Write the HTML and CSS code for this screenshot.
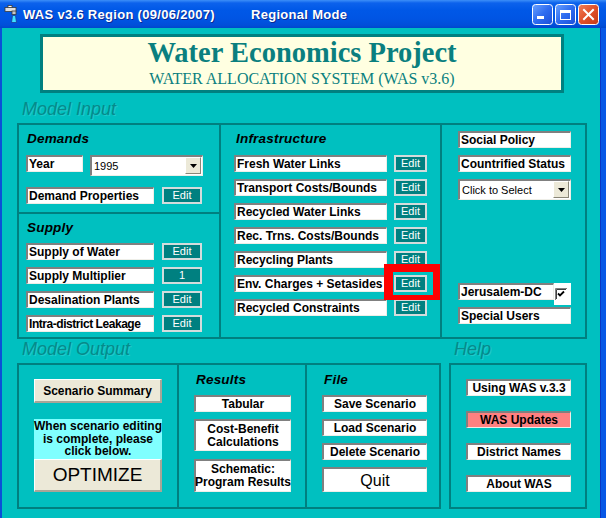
FILE: index.html
```html
<!DOCTYPE html>
<html>
<head>
<meta charset="utf-8">
<title>WAS v3.6 Region</title>
<link rel="stylesheet" href="styles.css">
</head>
<body>
<div class="window">
  <div class="titlebar">
    <svg class="app-icon" width="16" height="18" viewBox="0 0 16 18">
      <rect x="1" y="2.5" width="11" height="4" fill="#e0e0e0" stroke="#3a3a3a" stroke-width="0.8"/>
      <rect x="4" y="0.5" width="4" height="2" fill="#ffffff" stroke="#3a3a3a" stroke-width="0.8"/>
      <rect x="8" y="6" width="4" height="3.5" fill="#c8c8c8" stroke="#3a3a3a" stroke-width="0.8"/>
      <path d="M8.5 10.5 L11.5 10.5 L12.5 17.5 L7.5 17.5 Z" fill="#3fe3ff" stroke="#1b3b9b" stroke-width="0.8"/>
    </svg>
    <span class="title">WAS v3.6 Region (09/06/2007)</span>
    <span class="title mode">Regional Mode</span>
    <div class="caption">
      <svg width="21" height="21" viewBox="0 0 21 21">
        <defs>
          <linearGradient id="gblue" x1="0" y1="0" x2="1" y2="1">
            <stop offset="0" stop-color="#6aa2ff"/>
            <stop offset="0.5" stop-color="#2e6cf0"/>
            <stop offset="1" stop-color="#1b4fd8"/>
          </linearGradient>
          <linearGradient id="gred" x1="0" y1="0" x2="1" y2="1">
            <stop offset="0" stop-color="#f0805a"/>
            <stop offset="0.5" stop-color="#e0502a"/>
            <stop offset="1" stop-color="#c23a16"/>
          </linearGradient>
        </defs>
        <rect x="0.5" y="0.5" width="20" height="20" rx="3" fill="url(#gblue)" stroke="#ffffff"/>
        <rect x="5" y="12" width="7" height="3" fill="#ffffff"/>
      </svg>
      <svg width="21" height="21" viewBox="0 0 21 21">
        <rect x="0.5" y="0.5" width="20" height="20" rx="3" fill="url(#gblue)" stroke="#ffffff"/>
        <rect x="5.5" y="6.5" width="10" height="9" fill="none" stroke="#ffffff"/>
        <rect x="5" y="6" width="11" height="3" fill="#ffffff"/>
      </svg>
      <svg width="21" height="21" viewBox="0 0 21 21">
        <rect x="0.5" y="0.5" width="20" height="20" rx="3" fill="url(#gred)" stroke="#ffffff"/>
        <path d="M6 6 L15 15 M15 6 L6 15" stroke="#ffffff" stroke-width="2" stroke-linecap="square"/>
      </svg>
    </div>
  </div>

  <div class="frame">
    <div class="client">
      <div class="banner">
        <div class="banner-title">Water Economics Project</div>
        <div class="banner-sub">WATER ALLOCATION SYSTEM (WAS v3.6)</div>
      </div>

      <div class="group-label first">Model Input</div>
      <div class="input-box">
        <div class="col col-left">
          <div class="demands">
            <div class="sec-title">Demands</div>
            <div class="row row-year">
              <div class="field f-year">Year</div>
              <div class="combo c-year">
                <span class="combo-text">1995</span>
                <span class="combo-btn"><svg width="7" height="4" viewBox="0 0 7 4"><polygon points="0,0 7,0 3.5,4" fill="#000"/></svg></span>
              </div>
            </div>
            <div class="row row-next">
              <div class="field f-left">Demand Properties</div>
              <div class="edit e-left">Edit</div>
            </div>
          </div>
          <div class="supply">
            <div class="sec-title">Supply</div>
            <div class="row row-first">
              <div class="field f-left">Supply of Water</div>
              <div class="edit e-left">Edit</div>
            </div>
            <div class="row row-next">
              <div class="field f-left">Supply Multiplier</div>
              <div class="edit e-left">1</div>
            </div>
            <div class="row row-next">
              <div class="field f-left">Desalination Plants</div>
              <div class="edit e-left">Edit</div>
            </div>
            <div class="row row-next">
              <div class="field f-left tight">Intra-district Leakage</div>
              <div class="edit e-left">Edit</div>
            </div>
          </div>
        </div>

        <div class="col col-mid">
          <div class="sec-title">Infrastructure</div>
          <div class="row row-first mrow">
            <div class="field f-mid">Fresh Water Links</div>
            <div class="edit e-mid">Edit</div>
          </div>
          <div class="row row-next mrow">
            <div class="field f-mid">Transport Costs/Bounds</div>
            <div class="edit e-mid">Edit</div>
          </div>
          <div class="row row-next mrow">
            <div class="field f-mid">Recycled Water Links</div>
            <div class="edit e-mid">Edit</div>
          </div>
          <div class="row row-next mrow">
            <div class="field f-mid">Rec. Trns. Costs/Bounds</div>
            <div class="edit e-mid">Edit</div>
          </div>
          <div class="row row-next mrow">
            <div class="field f-mid">Recycling Plants</div>
            <div class="edit e-mid">Edit</div>
          </div>
          <div class="row row-next mrow marked">
            <div class="field f-mid">Env. Charges + Setasides</div>
            <div class="edit e-mid">Edit</div>
            <span class="highlight"></span>
          </div>
          <div class="row row-next mrow">
            <div class="field f-mid">Recycled Constraints</div>
            <div class="edit e-mid">Edit</div>
          </div>
        </div>

        <div class="col col-right">
          <div class="field f-right">Social Policy</div>
          <div class="field f-right gap7">Countrified Status</div>
          <div class="combo c-right gap7">
            <span class="combo-text">Click to Select</span>
            <span class="combo-btn"><svg width="7" height="4" viewBox="0 0 7 4"><polygon points="0,0 7,0 3.5,4" fill="#000"/></svg></span>
          </div>
          <div class="jrow">
            <div class="field f-jeru">Jerusalem-DC</div>
            <div class="chkwrap">
              <svg width="12" height="12" viewBox="0 0 12 12">
                <rect x="0" y="0" width="12" height="12" fill="#ffffff"/>
                <path d="M0.5 12 L0.5 0.5 L12 0.5" fill="none" stroke="#808080"/>
                <path d="M1.5 11 L1.5 1.5 L11 1.5" fill="none" stroke="#404040"/>
                <path d="M3 5.5 L5 7.5 L9 3.5" fill="none" stroke="#000000" stroke-width="1.8"/>
              </svg>
            </div>
          </div>
          <div class="field f-right special">Special Users</div>
        </div>
      </div>

      <div class="out-row">
        <div class="out-group">
          <div class="group-label">Model Output</div>
          <div class="output-box">
            <div class="ocol ocol-1">
              <div class="raised scen">Scenario Summary</div>
              <div class="notice">When scenario editing<br>is complete, please<br>click below.</div>
              <div class="raised optimize">OPTIMIZE</div>
            </div>
            <div class="ocol ocol-2">
              <div class="sec-title small-pad">Results</div>
              <div class="wbtn res first-btn h17">Tabular</div>
              <div class="wbtn res two-line cb">Cost-Benefit<br>Calculations</div>
              <div class="wbtn res two-line sch">Schematic:<br>Program Results</div>
            </div>
            <div class="ocol ocol-3">
              <div class="sec-title small-pad">File</div>
              <div class="wbtn filebtn first-btn h17">Save Scenario</div>
              <div class="wbtn filebtn next-btn h17">Load Scenario</div>
              <div class="wbtn filebtn next-btn h17">Delete Scenario</div>
              <div class="wbtn filebtn next-btn quit">Quit</div>
            </div>
          </div>
        </div>
        <div class="help-group">
          <div class="group-label">Help</div>
          <div class="help-box">
            <div class="wbtn helpbtn">Using WAS v.3.3</div>
            <div class="wbtn helpbtn pink">WAS Updates</div>
            <div class="wbtn helpbtn">District Names</div>
            <div class="wbtn helpbtn">About WAS</div>
          </div>
        </div>
      </div>
    </div>
  </div>
</div>
</body>
</html>
```

FILE: styles.css
```css
* { box-sizing: border-box; }
html, body { margin: 0; padding: 0; }
body {
  width: 606px;
  height: 518px;
  overflow: hidden;
  background: #0055e5;
  font-family: "Liberation Sans", Arial, sans-serif;
  color: #000;
}

.window { width: 606px; height: 518px; display: flex; flex-direction: column; }

/* ---------- title bar ---------- */
.titlebar {
  height: 28px;
  flex: none;
  display: flex;
  align-items: center;
  padding-left: 4px;
  color: #fff;
  background: linear-gradient(#3d8ff8 0px, #0c62ec 3px, #0058e7 10px, #0055e4 18px, #004fda 25px, #0047cc 28px);
}
.app-icon { margin-right: 3px; flex: none; }
.title {
  font-weight: bold;
  font-size: 13px;
  letter-spacing: 0.3px;
  line-height: 15px;
  padding-top: 1px;
  white-space: nowrap;
  text-shadow: 1px 1px 0 #0a2a90;
}
.mode { margin-left: 36px; }
.caption {
  margin-left: auto;
  margin-right: 7px;
  align-self: flex-start;
  margin-top: 4px;
  display: flex;
  gap: 2px;
}
.caption svg { display: block; }

/* ---------- frame ---------- */
.frame {
  flex: 1;
  display: flex;
  border-left: 2px solid #0a4fd8;
  border-right: 6px solid #0758e6;
}
.client {
  flex: 1;
  background: #00c0c0;
  padding: 6px 0 0 15px;
  box-shadow: 1px 0 0 #0a36c4;
}

/* ---------- banner ---------- */
.banner {
  margin-left: 23px;
  width: 524px;
  height: 59px;
  border: 3px solid #008080;
  background: #ffffe1;
  color: #0a7f7f;
  text-align: center;
  font-family: "Liberation Serif", "Times New Roman", serif;
  padding-top: 1px;
}
.banner-title { font-size: 28.5px; font-weight: bold; line-height: 30px; white-space: nowrap; }
.banner-sub { font-size: 16px; line-height: 18px; margin-top: 2px; white-space: nowrap; }

/* ---------- group labels ---------- */
.group-label {
  height: 24px;
  line-height: 20px;
  font-size: 18px;
  font-style: italic;
  color: #078a8a;
  text-shadow: 1px 1px 0 #1ecaca;
  padding-left: 5px;
  white-space: nowrap;
}
.group-label.first { margin-top: 6px; }

.sec-title {
  height: 15px;
  line-height: 15px;
  font-size: 13.5px;
  font-weight: bold;
  font-style: italic;
  letter-spacing: 0.2px;
  white-space: nowrap;
}

/* ---------- common widgets ---------- */
.field {
  height: 17px;
  background: #fff;
  border-style: solid;
  border-width: 2px 1px 1px 2px;
  border-color: #808080 #eeeee8 #eeeee8 #808080;
  font-size: 12px;
  font-weight: bold;
  line-height: 14px;
  padding-left: 1px;
  white-space: nowrap;
  overflow: hidden;
}
.field.tight { letter-spacing: -0.45px; }

.edit {
  height: 17px;
  background: #008080;
  color: #fff;
  border: 2px solid #d4dcdc;
  font-size: 11px;
  line-height: 13px;
  text-align: center;
}

.combo {
  height: 21px;
  background: #fff;
  border-style: solid;
  border-width: 2px 1px 1px 2px;
  border-color: #808080 #eeeee8 #eeeee8 #808080;
  display: flex;
  align-items: flex-start;
}
.combo-text {
  flex: 1;
  font-size: 11px;
  line-height: 18px;
  padding-left: 2px;
  white-space: nowrap;
}
.combo-btn {
  width: 16px;
  height: 17px;
  margin-right: 1px;
  background: #ece9d8;
  border-style: solid;
  border-width: 1px;
  border-color: #ffffff #8a8778 #8a8778 #ffffff;
  display: flex;
  align-items: center;
  justify-content: center;
}
.combo-btn svg { display: block; }

.row { display: flex; gap: 8px; height: 17px; }
.row-first { margin-top: 8px; }
.row-next { margin-top: 7px; }

/* ---------- model input box ---------- */
.input-box {
  width: 570px;
  height: 216px;
  border: 2px solid #008080;
  display: grid;
  grid-template-columns: 202px 221px 143px;
}
.col-left { border-right: 2px solid #008080; display: flex; flex-direction: column; }
.col-mid { border-right: 2px solid #008080; padding: 6px 0 0 13px; }
.col-right { padding: 6px 0 0 16px; }

.demands {
  height: 89px;
  border-bottom: 2px solid #008080;
  padding: 6px 0 0 7px;
}
.demands .sec-title, .supply .sec-title { padding-left: 1px; }
.supply { padding: 6px 0 0 7px; }

.row-year { margin-top: 9px; height: 21px; gap: 7px; align-items: flex-start; }
.demands .row-next { margin-top: 11px; }
.f-year { width: 57px; }
.c-year { width: 113px; }
.f-left { width: 128px; }
.e-left { width: 40px; }

.col-mid .sec-title { padding-left: 2px; }
.mrow { gap: 7px; }
.col-mid .row-first { margin-top: 9px; }
.f-mid { width: 153px; }
.e-mid { width: 33px; }

.marked { position: relative; }
.highlight {
  position: absolute;
  left: 150px;
  top: -11px;
  width: 56px;
  height: 36px;
  border-style: solid;
  border-color: #ff0000;
  border-width: 8px 7px 5px 9px;
}

.f-right { width: 113px; }
.gap7 { margin-top: 7px; }
.c-right { width: 113px; }
.jrow { display: flex; margin-top: 83px; height: 22px; align-items: flex-start; }
.f-jeru { width: 96px; }
.chkwrap { width: 17px; height: 22px; background: #fff; padding: 5px 0 0 1px; }
.chkwrap svg { display: block; }
.special { margin-top: 2px; }

/* ---------- bottom row ---------- */
.out-row { display: flex; gap: 8px; }
.out-group { width: 424px; }
.help-group { width: 138px; }

.output-box {
  height: 146px;
  border: 2px solid #008080;
  display: grid;
  grid-template-columns: 160px 128px 132px;
}
.ocol-1 { border-right: 2px solid #008080; padding: 14px 0 0 15px; }
.ocol-2 { border-right: 2px solid #008080; padding: 7px 0 0 15px; }
.ocol-3 { padding: 7px 0 0 15px; }
.small-pad { padding-left: 2px; }

.raised {
  width: 128px;
  background: #ece9d8;
  border-style: solid;
  border-width: 1px 2px 2px 1px;
  border-color: #ffffff #a9a597 #a9a597 #ffffff;
  display: flex;
  align-items: center;
  justify-content: center;
  white-space: nowrap;
}
.scen { height: 24px; font-size: 12px; font-weight: bold; }
.optimize { height: 33px; font-size: 19px; }

.notice {
  width: 128px;
  height: 40px;
  margin-top: 16px;
  background: #80ffff;
  font-size: 12px;
  font-weight: bold;
  line-height: 12.5px;
  text-align: center;
  padding-top: 1px;
  white-space: nowrap;
}

.wbtn {
  background: #fff;
  border-style: solid;
  border-width: 2px 1px 1px 2px;
  border-color: #808080 #eeeee8 #eeeee8 #808080;
  font-size: 12px;
  font-weight: bold;
  line-height: 13px;
  text-align: center;
  display: flex;
  align-items: center;
  justify-content: center;
  white-space: nowrap;
}
.h17 { height: 17px; }
.res { width: 97px; }
.first-btn { margin-top: 8px; }
.cb { height: 32px; margin-top: 7px; }
.sch { height: 33px; margin-top: 8px; }
.filebtn { width: 105px; }
.next-btn { margin-top: 7px; }
.quit { height: 25px; font-size: 16px; font-weight: normal; }

.help-box {
  height: 146px;
  border: 2px solid #008080;
  padding: 14px 0 0 15px;
}
.helpbtn { width: 105px; height: 17px; margin-bottom: 15px; }
.pink { background: #ff8080; }
```
